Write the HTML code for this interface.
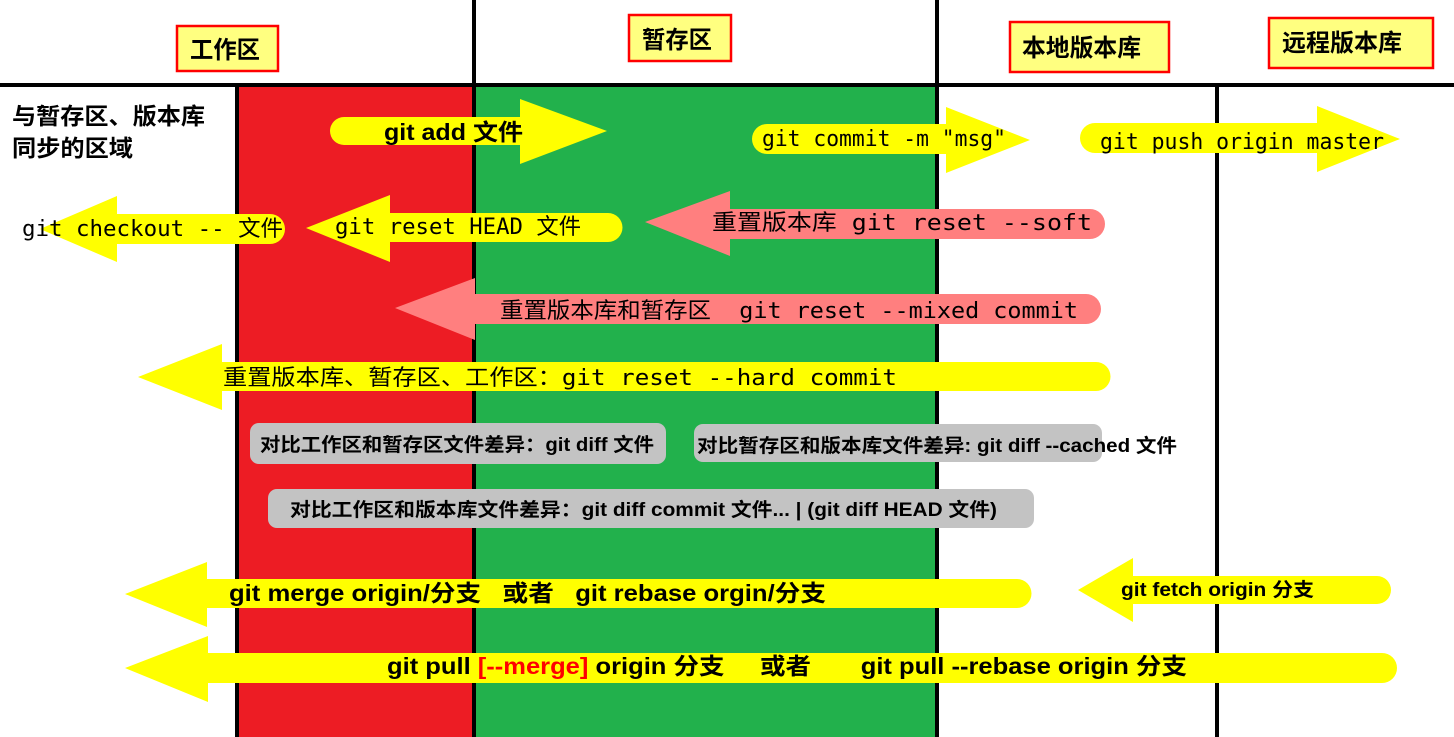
<!DOCTYPE html>
<html><head><meta charset="utf-8"><style>
html,body{margin:0;padding:0;background:#fff;}
svg{display:block}
.m{font-family:"DejaVu Sans Mono","Liberation Mono","Noto Sans CJK SC",monospace;font-size:22px;fill:#000}
.b{font-family:"Liberation Sans","Noto Sans CJK SC",sans-serif;font-weight:bold;fill:#000}
</style></head><body>
<svg width="1454" height="737" viewBox="0 0 1454 737" xmlns="http://www.w3.org/2000/svg">
<rect x="238" y="86" width="237" height="651" fill="#ed1c24"/>
<rect x="475" y="86" width="463" height="651" fill="#22b14c"/>
<g stroke="#000" stroke-width="4">
<line x1="0" y1="85" x2="1454" y2="85"/>
<line x1="237" y1="84" x2="237" y2="737"/>
<line x1="474" y1="0" x2="474" y2="737"/>
<line x1="937" y1="0" x2="937" y2="737"/>
<line x1="1217" y1="86" x2="1217" y2="737"/>
</g>
<g fill="#ffff80" stroke="#f00" stroke-width="2.5">
<rect x="177" y="26" width="101" height="45"/>
<rect x="629" y="15" width="102" height="46"/>
<rect x="1010" y="22" width="159" height="50"/>
<rect x="1269" y="18" width="164" height="50"/>
</g>
<g class="b" font-size="24">
<text x="190" y="58" textLength="70" lengthAdjust="spacingAndGlyphs">工作区</text>
<text x="642" y="48" textLength="70" lengthAdjust="spacingAndGlyphs">暂存区</text>
<text x="1022" y="56" textLength="119" lengthAdjust="spacingAndGlyphs">本地版本库</text>
<text x="1282" y="51" textLength="120" lengthAdjust="spacingAndGlyphs">远程版本库</text>
</g>
<text class="b" font-size="23" x="12" y="124" textLength="193" lengthAdjust="spacingAndGlyphs">与暂存区、版本库</text>
<text class="b" font-size="23" x="12" y="156" textLength="121" lengthAdjust="spacingAndGlyphs">同步的区域</text>

<g fill="#ffff00">
<path d="M344 117 H520 V99 L607 131 L520 164 V145 H344 A14 14 0 0 1 344 117Z"/>
<path d="M767 124 H946 V107 L1030 140 L946 173 V154 H767 A15 15 0 0 1 767 124Z"/>
<path d="M1095 123 H1317 V106 L1400 139 L1317 172 V153 H1095 A15 15 0 0 1 1095 123Z"/>
<path d="M40 229 L117 196 V214 H270 A15 15 0 0 1 270 244 H117 V262Z"/>
<path d="M306 228 L390 195 V213 H608 A14.5 14.5 0 0 1 608 242 H390 V262Z"/>
<path d="M138 377 L222 344 V362 H1096 A14.5 14.5 0 0 1 1096 391 H222 V410Z"/>
<path d="M125 594 L207 562 V579 H1017 A14.5 14.5 0 0 1 1017 608 H207 V627Z"/>
<path d="M1078 590 L1133 558 V576 H1377 A14 14 0 0 1 1377 604 H1133 V622Z"/>
<path d="M125 668 L208 636 V653 H1382 A15 15 0 0 1 1382 683 H208 V702Z"/>
</g>
<g fill="#ff7f7f">
<path d="M645 222 L730 191 V209 H1090 A15 15 0 0 1 1090 239 H730 V256Z"/>
<path d="M395 308 L475 278 V294 H1086 A15 15 0 0 1 1086 324 H475 V340Z"/>
</g>
<g fill="#c3c3c3">
<rect x="250" y="423" width="416" height="41" rx="9"/>
<rect x="694" y="424" width="408" height="38" rx="9"/>
<rect x="268" y="489" width="766" height="39" rx="9"/>
</g>
<text class="b" font-size="23" x="384" y="140" textLength="139" lengthAdjust="spacingAndGlyphs">git add 文件</text>
<text class="m" x="762" y="146" textLength="244" lengthAdjust="spacingAndGlyphs">git commit -m "msg"</text>
<text class="m" x="1100" y="149" textLength="284" lengthAdjust="spacingAndGlyphs">git push origin master</text>
<text class="m" x="22" y="236" textLength="261" lengthAdjust="spacingAndGlyphs">git checkout -- 文件</text>
<text class="m" x="335" y="234" textLength="246" lengthAdjust="spacingAndGlyphs">git reset HEAD 文件</text>
<text class="m" x="712" y="230" textLength="380" lengthAdjust="spacingAndGlyphs">重置版本库 git reset --soft</text>
<text class="m" x="500" y="318" textLength="578" lengthAdjust="spacingAndGlyphs">重置版本库和暂存区&#160;&#160;git reset --mixed commit</text>
<text class="m" x="223" y="385" textLength="674" lengthAdjust="spacingAndGlyphs">重置版本库、暂存区、工作区：git reset --hard commit</text>
<text class="b" font-size="19" x="260" y="451" textLength="394" lengthAdjust="spacingAndGlyphs">对比工作区和暂存区文件差异：git diff 文件</text>
<text class="b" font-size="19" x="697" y="452" textLength="480" lengthAdjust="spacingAndGlyphs">对比暂存区和版本库文件差异: git diff --cached 文件</text>
<text class="b" font-size="19" x="290" y="516" textLength="707" lengthAdjust="spacingAndGlyphs">对比工作区和版本库文件差异：git diff commit 文件... | (git diff HEAD 文件)</text>
<text class="b" font-size="23" x="229" y="601" textLength="597" lengthAdjust="spacingAndGlyphs">git merge origin/分支&#160;&#160;&#160;或者&#160;&#160;&#160;git rebase orgin/分支</text>
<text class="b" font-size="19" x="1121" y="596" textLength="193" lengthAdjust="spacingAndGlyphs">git fetch origin 分支</text>
<text class="b" font-size="23" x="387" y="674" textLength="800" lengthAdjust="spacingAndGlyphs">git pull <tspan fill="#f00">[--merge]</tspan> origin 分支&#160;&#160;&#160;&#160;&#160;或者&#160;&#160;&#160;&#160;&#160;&#160;&#160;git pull --rebase origin 分支</text>
</svg>
</body></html>
